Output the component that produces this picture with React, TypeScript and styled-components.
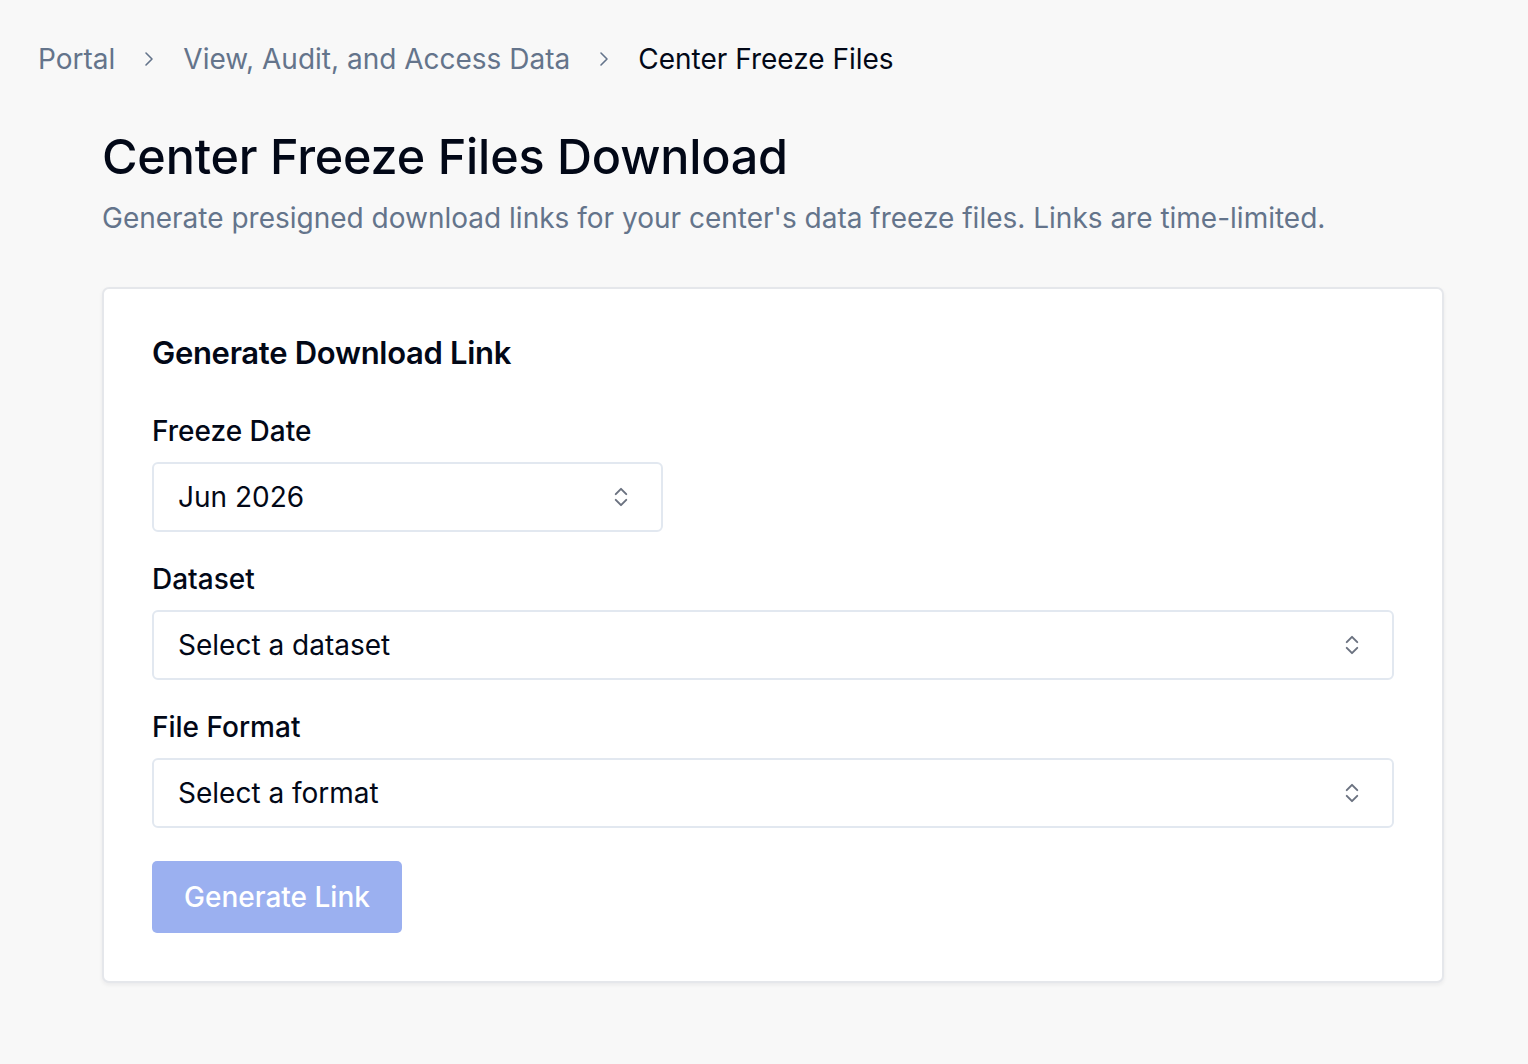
import React from "react";
import styled, { createGlobalStyle } from "styled-components";

const GlobalStyle = createGlobalStyle`
  html, body {
    margin: 0;
    padding: 0;
    background: #f8f8f8;
    font-family: Inter, "Noto Sans", "Liberation Sans", sans-serif;
    color: #020817;
  }
  * { box-sizing: border-box; }
`;

const Page = styled.div`
  min-height: 1064px;
  background: #f8f8f8;
  display: flex;
  flex-direction: column;
`;

const Breadcrumbs = styled.nav`
  display: flex;
  align-items: center;
  gap: 22px;
  padding: 39px 0 0 38px;
  height: 78px;
  font-size: 28px;
  line-height: 38px;
`;

const Crumb = styled.span<{ $current?: boolean }>`
  color: ${(p) => (p.$current ? "#020817" : "#64748b")};
  white-space: nowrap;
`;

const Main = styled.main`
  display: flex;
  flex-direction: column;
  padding: 49px 84px 0 102px;
`;

const Title = styled.h1`
  margin: 0;
  font-size: 48.5px;
  line-height: 60px;
  font-weight: 500;
  letter-spacing: -0.2px;
  color: #020817;
`;

const Subtitle = styled.p`
  margin: 12px 0 0;
  font-size: 28px;
  line-height: 38px;
  color: #64748b;
`;

const Card = styled.section`
  margin-top: 50px;
  background: #ffffff;
  border: 2px solid #e5e7eb;
  border-radius: 7px;
  box-shadow: 0 2px 4px rgba(15, 23, 42, 0.06);
  padding: 44px 48px 48px 48px;
  display: flex;
  flex-direction: column;
`;

const CardTitle = styled.h2`
  margin: 0 0 40px;
  font-size: 31px;
  line-height: 40px;
  font-weight: 600;
  letter-spacing: -0.3px;
  color: #020817;
`;

const Field = styled.div`
  display: flex;
  flex-direction: column;
  gap: 13px;
  margin-bottom: 29px;
`;

const Label = styled.label`
  font-size: 28px;
  line-height: 36px;
  font-weight: 500;
  color: #020817;
`;

const Select = styled.button<{ $width?: string }>`
  width: ${(p) => p.$width ?? "100%"};
  height: 70px;
  display: flex;
  align-items: center;
  justify-content: space-between;
  padding: 0 26px 0 24px;
  background: #ffffff;
  border: 2px solid #e2e8f0;
  border-radius: 6px;
  font-family: inherit;
  font-size: 28px;
  color: #020817;
  text-align: left;
  cursor: pointer;
`;

const SelectIcon = styled.svg`
  width: 28px;
  height: 28px;
  flex-shrink: 0;
  color: #6b7280;
`;

const Button = styled.button`
  margin-top: 4px;
  align-self: flex-start;
  width: 250px;
  height: 72px;
  background: #9bb0f0;
  color: #ffffff;
  border: none;
  border-radius: 5px;
  font-family: inherit;
  font-size: 28px;
  font-weight: 500;
  cursor: not-allowed;
`;

const ChevronRight = () => (
  <svg width="24" height="24" viewBox="0 0 24 24" fill="none" stroke="#64748b" strokeWidth="1.6" strokeLinecap="round" strokeLinejoin="round">
    <path d="m9 18 6-6-6-6" />
  </svg>
);

const UpDown = () => (
  <SelectIcon viewBox="0 0 24 24" fill="none" stroke="currentColor" strokeWidth="1.7" strokeLinecap="round" strokeLinejoin="round">
    <path d="m7.5 9.5 4.5-4.5 4.5 4.5" />
    <path d="m7.5 14.5 4.5 4.5 4.5-4.5" />
  </SelectIcon>
);

export default function App() {
  return (
    <>
      <GlobalStyle />
      <Page>
        <Breadcrumbs>
          <Crumb>Portal</Crumb>
          <ChevronRight />
          <Crumb>View, Audit, and Access Data</Crumb>
          <ChevronRight />
          <Crumb $current>Center Freeze Files</Crumb>
        </Breadcrumbs>
        <Main>
          <Title>Center Freeze Files Download</Title>
          <Subtitle>
            Generate presigned download links for your center's data freeze files. Links are time-limited.
          </Subtitle>
          <Card>
            <CardTitle>Generate Download Link</CardTitle>
            <Field>
              <Label>Freeze Date</Label>
              <Select $width="511px">
                <span>Jun 2026</span>
                <UpDown />
              </Select>
            </Field>
            <Field>
              <Label>Dataset</Label>
              <Select>
                <span>Select a dataset</span>
                <UpDown />
              </Select>
            </Field>
            <Field>
              <Label>File Format</Label>
              <Select>
                <span>Select a format</span>
                <UpDown />
              </Select>
            </Field>
            <Button disabled>Generate Link</Button>
          </Card>
        </Main>
      </Page>
    </>
  );
}
